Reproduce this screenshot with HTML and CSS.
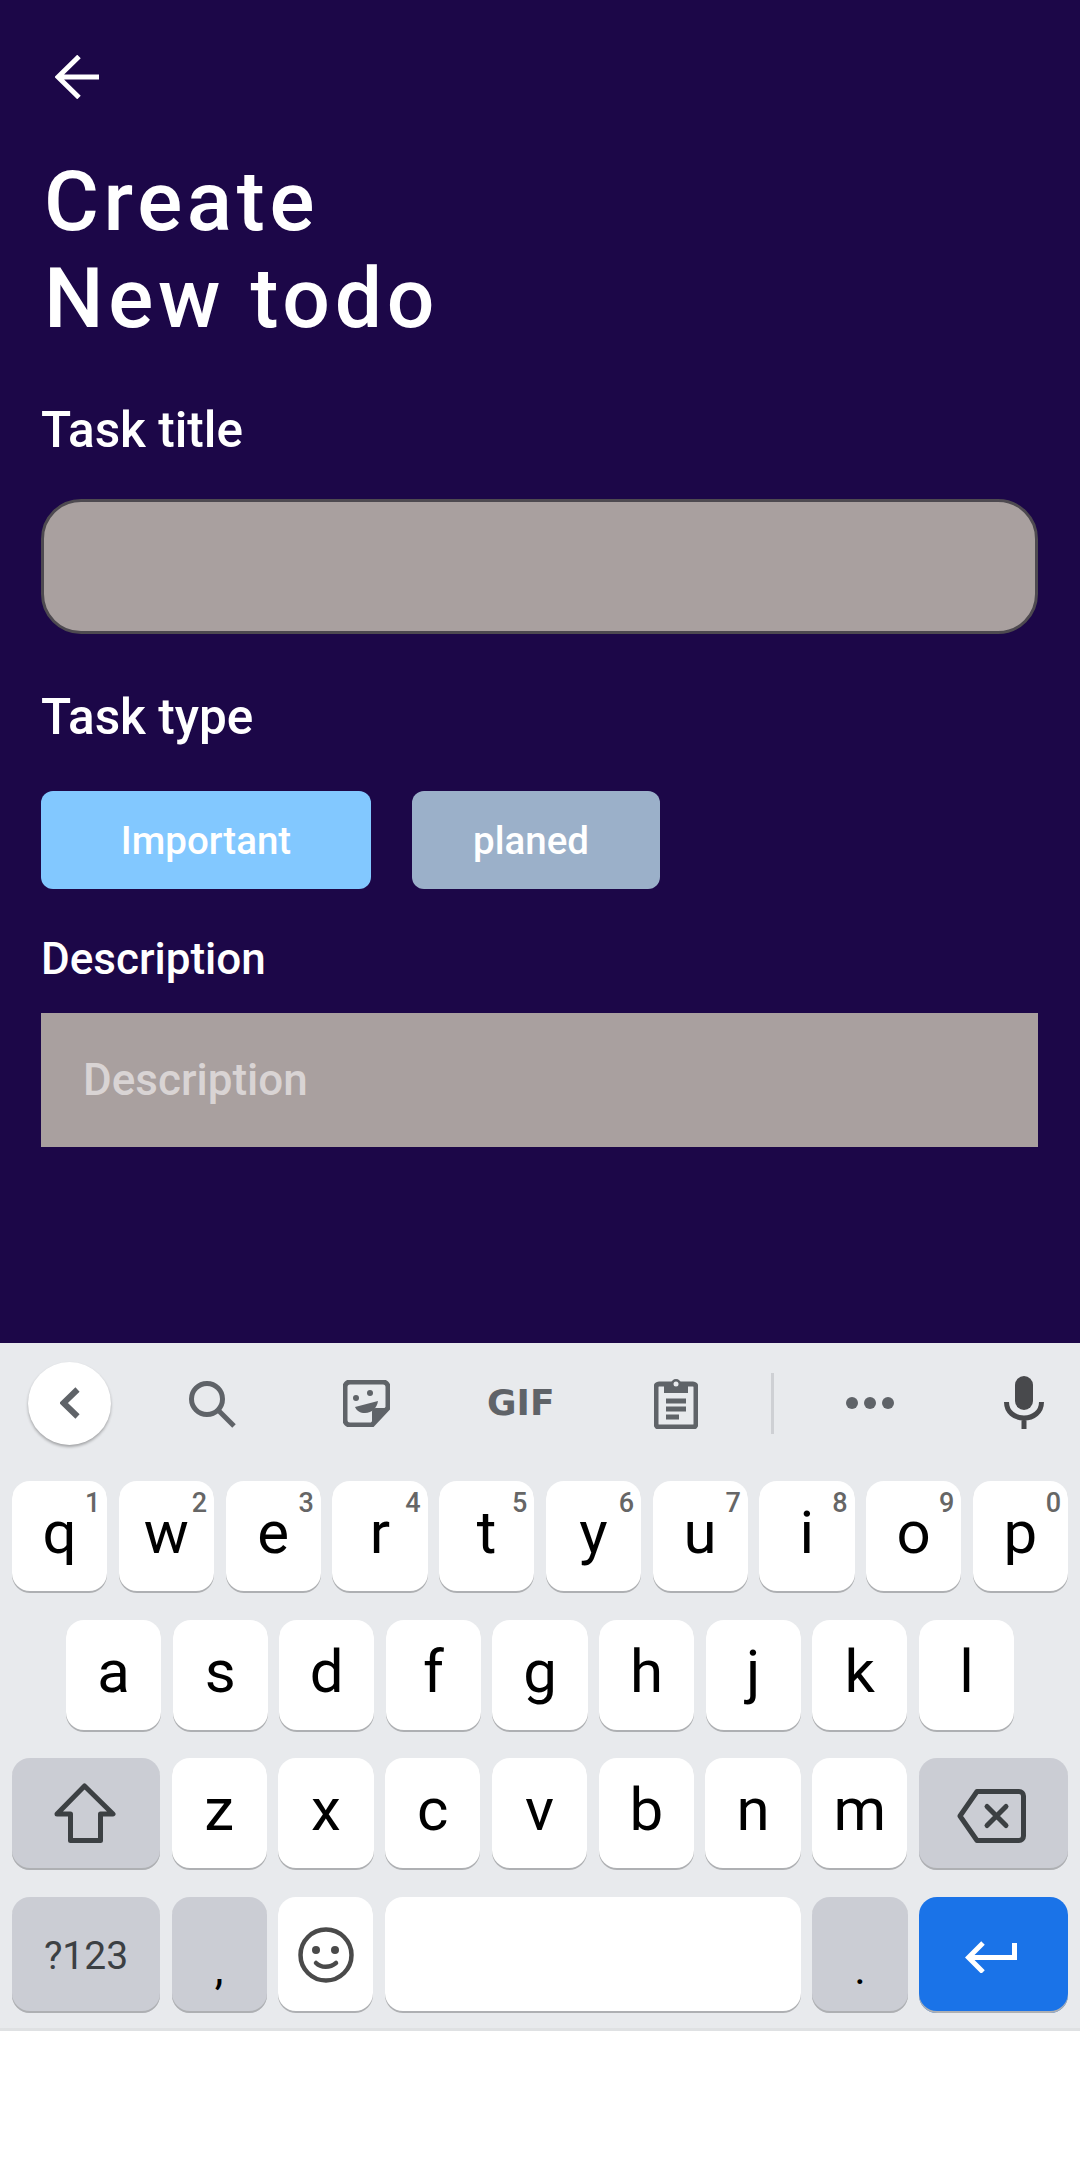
FILE: index.html
```html
<!DOCTYPE html>
<html lang="en">

<head>
    <meta charset="UTF-8">
    <meta name="viewport" content="width=device-width, initial-scale=1.0">
    <title>Create New todo</title>
    <link rel="stylesheet" href="styles.css">
</head>

<body>

    <div class="screen">
        <svg class="back-arrow" viewBox="0 0 44 44">
            <path d="M44 22H3M24 1.5L3 22l21 20.5" />
        </svg>

        <h1 class="page-title">Create<br>New todo</h1>

        <form class="todo-form">
            <label class="field-label" for="taskTitle">Task title</label>
            <input class="title-input" type="text" id="taskTitle">

            <label class="field-label type-label">Task type</label>
            <div class="type-buttons">
                <button class="type-btn type-important" type="button">Important</button>
                <button class="type-btn type-planed" type="button">planed</button>
            </div>

            <label class="field-label desc-label" for="taskDesc">Description</label>
            <input class="desc-input" type="text" id="taskDesc" placeholder="Description">
        </form>
    </div>

    <div class="keyboard">
        <div class="kb-toolbar">
            <div class="tool-back">
                <svg width="20" height="32" viewBox="0 0 20 32">
                    <path class="ic-stroke chevron" d="M17.5 2.5L3.5 16l14 13.5" />
                </svg>
            </div>
            <svg class="tool-search" width="47" height="47" viewBox="0 0 47 47">
                <circle class="ic-stroke" cx="18" cy="18" r="15.5" />
                <path class="ic-stroke" d="M29 29l16 16" />
            </svg>
            <svg class="tool-sticker" width="47" height="47" viewBox="0 0 47 47">
                <path class="ic-stroke" d="M7 2h33a5 5 0 0 1 5 5v21L29 45H7a5 5 0 0 1-5-5V7a5 5 0 0 1 5-5z" />
                <path class="ic-fill" d="M45 28H33a4 4 0 0 0-4 4v13z" />
                <circle class="ic-fill" cx="13" cy="18" r="3" />
                <circle class="ic-fill" cx="27" cy="13" r="3" />
                <path class="ic-fill" d="M12 27l23-6c-1 7-6 12-13 12-5 0-8-2-10-6z" />
            </svg>
            <span class="tool-gif">GIF</span>
            <svg class="tool-clip" width="44" height="52" viewBox="0 0 44 52">
                <rect class="ic-stroke" x="2" y="7" width="40" height="43" rx="3" />
                <path class="ic-fill" d="M10 7h7a5 5 0 0 1 10 0h7v9H10z" />
                <circle cx="22" cy="7" r="2.5" fill="#e8eaed" />
                <path class="ic-stroke" d="M12 24h20M12 32h20M12 40h13" />
            </svg>
            <div class="tool-divider"></div>
            <div class="tool-dots"><i></i><i></i><i></i></div>
            <svg class="tool-mic" width="40" height="53" viewBox="0 0 40 53">
                <rect x="11" y="0" width="18" height="34" rx="9" fill="#48494c" />
                <path class="mic-arc" d="M2.5 26c0 10 8 16 17.500 16s17.500-6 17.500-16M20 42v11" />
            </svg>
        </div>

        <div class="kb-rows">
            <div class="kb-row">
                <div class="key">q<span class="hint">1</span></div>
                <div class="key">w<span class="hint">2</span></div>
                <div class="key">e<span class="hint">3</span></div>
                <div class="key">r<span class="hint">4</span></div>
                <div class="key">t<span class="hint">5</span></div>
                <div class="key">y<span class="hint">6</span></div>
                <div class="key">u<span class="hint">7</span></div>
                <div class="key">i<span class="hint">8</span></div>
                <div class="key">o<span class="hint">9</span></div>
                <div class="key">p<span class="hint">0</span></div>
            </div>
            <div class="kb-row row-home">
                <div class="key">a</div>
                <div class="key">s</div>
                <div class="key">d</div>
                <div class="key">f</div>
                <div class="key">g</div>
                <div class="key">h</div>
                <div class="key">j</div>
                <div class="key">k</div>
                <div class="key">l</div>
            </div>
            <div class="kb-row">
                <div class="key key-wide key-left key-alt key-shift">
                    <svg width="62" height="60" viewBox="0 0 62 60">
                        <path class="key-ic" d="M30.500 3L59 31H46.500V57.500H16.500V31H3z" />
                    </svg>
                </div>
                <div class="key">z</div>
                <div class="key">x</div>
                <div class="key">c</div>
                <div class="key">v</div>
                <div class="key">b</div>
                <div class="key">n</div>
                <div class="key">m</div>
                <div class="key key-wide key-alt key-del">
                    <svg width="69" height="54" viewBox="0 0 69 54">
                        <path class="key-ic" d="M20 2.500H62a4.500 4.500 0 0 1 4.500 4.500V47a4.500 4.500 0 0 1-4.500 4.500H20L3 27z" />
                        <path class="key-ic" d="M30 17.500l19 19M49 17.500l-19 19" />
                    </svg>
                </div>
            </div>
            <div class="kb-row row-bottom">
                <div class="key key-wide key-left key-alt key-sym">?123</div>
                <div class="key key-alt key-punct">,</div>
                <div class="key key-emoji">
                    <svg width="56" height="56" viewBox="0 0 56 56">
                        <circle class="emoji-ic" cx="28" cy="28" r="25.500" />
                        <circle cx="18" cy="23" r="4" fill="#4a4a4a" />
                        <circle cx="37" cy="23" r="4" fill="#4a4a4a" />
                        <path class="emoji-ic" d="M18 36c5 5 14 5 20 0" />
                    </svg>
                </div>
                <div class="key key-space"></div>
                <div class="key key-alt key-punct">.</div>
                <div class="key key-wide key-enter">
                    <svg width="52" height="32" viewBox="0 0 52 32">
                        <path class="enter-ic" d="M49.500 2V16.500H4M18 2L3.500 16.500 18 31" />
                    </svg>
                </div>
            </div>
        </div>
    </div>

</body>
</html>
```

FILE: styles.css
```css
body {
    font-family: Roboto, sans-serif;
    background-color: #fff;
    margin: 0;
    height: 2160px;
    overflow: hidden;
}

/* app part */
.screen {
    height: 1343px;
    box-sizing: border-box;
    background-color: #1c0748;
    padding-top: 55px;
    color: #fff;
}

.back-arrow {
    display: block;
    width: 44px;
    height: 44px;
    margin-left: 55px;
    fill: none;
    stroke: #fff;
    stroke-width: 5;
}

.page-title {
    margin: 54px 0 0 44px;
    font-size: 84px;
    line-height: 97px;
    font-weight: 500;
    letter-spacing: 4.7px;
}

.todo-form {
    display: flex;
    flex-direction: column;
    align-items: flex-start;
    padding: 0 42px 0 41px;
}

.field-label {
    display: block;
    margin-top: 55px;
    font-size: 49.5px;
    line-height: 56px;
    font-weight: 500;
}

.title-input,
.desc-input {
    width: 100%;
    height: 135px;
    box-sizing: border-box;
    background-color: #a9a09f;
    font-family: Roboto, sans-serif;
}

.title-input {
    margin-top: 41px;
    border: 3px solid #4e4a50;
    border-radius: 40px;
}

.type-buttons {
    display: flex;
    gap: 41px;
    margin-top: 46px;
}

.type-btn {
    height: 98px;
    border: none;
    border-radius: 12px;
    color: #fff;
    font-family: Roboto, sans-serif;
    font-size: 38.5px;
    font-weight: 500;
}

.type-important {
    width: 330px;
    background-color: #82c8ff;
}

.type-planed {
    width: 248px;
    background-color: #9bb0c9;
    padding-right: 16px;
}

.desc-label {
    margin-top: 44px;
    font-size: 44px;
    line-height: 52px;
}

.desc-input {
    margin-top: 28px;
    height: 134px;
    border: none;
    padding: 0 42px;
    font-size: 44px;
    font-weight: 500;
}

.desc-input::placeholder {
    color: #d9d4d4;
    opacity: 1;
}

/* keyboard */
.keyboard {
    height: 688px;
    box-sizing: border-box;
    background-color: #e8eaed;
    border-bottom: 3px solid #dfe1e3;
}

.kb-toolbar {
    display: flex;
    align-items: center;
    height: 138px;
    box-sizing: border-box;
    padding: 0 0 18px 28px;
}

.ic-stroke {
    fill: none;
    stroke: #5f6368;
    stroke-width: 5;
}

.ic-fill {
    fill: #5f6368;
}

.chevron {
    stroke-width: 6;
}

.tool-back {
    display: flex;
    align-items: center;
    justify-content: center;
    width: 83px;
    height: 83px;
    border-radius: 50%;
    background-color: #fff;
    box-shadow: 0 2px 3px rgba(0, 0, 0, 0.3);
    padding-left: 1px;
    box-sizing: border-box;
}

.tool-search {
    margin-left: 78px;
    margin-top: 3px;
}

.tool-sticker {
    margin-left: 107px;
}

.tool-gif {
    margin-left: 97px;
    width: 68px;
    font-family: "DejaVu Sans", sans-serif;
    font-size: 36px;
    line-height: 40px;
    font-weight: 700;
    color: #5f6368;
}

.tool-clip {
    margin-left: 99px;
}

.tool-divider {
    width: 3px;
    height: 61px;
    margin-left: 73px;
    background-color: #ced0d4;
}

.tool-dots {
    display: flex;
    gap: 6px;
    margin-left: 72px;
}

.tool-dots i {
    width: 12px;
    height: 12px;
    border-radius: 50%;
    background-color: #5f6368;
}

.tool-mic {
    margin-left: 110px;
    margin-top: -1px;
}

.mic-arc {
    fill: none;
    stroke: #48494c;
    stroke-width: 5;
}

.kb-rows {
    display: flex;
    flex-direction: column;
    gap: 26.5px;
    padding: 0 12px;
}

.kb-row {
    display: flex;
    gap: 11.5px;
    height: 112px;
}

.row-home {
    padding: 0 54px;
}

.row-bottom {
    height: 116px;
}

.key {
    position: relative;
    flex: 1 1 0;
    display: flex;
    align-items: center;
    justify-content: center;
    box-sizing: border-box;
    padding-bottom: 9px;
    background-color: #fff;
    border-radius: 18px;
    box-shadow: inset 0 -2px 0 #aeb0b3;
    color: #000;
    font-size: 60px;
}

.hint {
    position: absolute;
    top: 7px;
    right: 7px;
    font-size: 27px;
    line-height: 30px;
    font-weight: 500;
    color: #666;
}

.key-wide {
    flex: 0 0 149px;
    padding-bottom: 0;
}

.key-left {
    flex-basis: 148px;
}

.key-alt {
    background-color: #cbcdd4;
}

.key-shift {
    padding: 0 2px 2px 0;
}

.key-del {
    padding: 4px 4px 0 0;
}

.key-emoji {
    padding-bottom: 0;
}

.key-space {
    flex: 0 0 416px;
}

.key-sym {
    font-size: 39px;
    color: #3c4043;
    padding-top: 2px;
}

.key-punct {
    font-size: 44px;
    padding: 28px 0 0 0;
}

.key-enter {
    background-color: #1a73e8;
    padding: 4px 5px 0 0;
}

.key-ic {
    fill: none;
    stroke: #3c4043;
    stroke-width: 5;
    stroke-linejoin: round;
    stroke-linecap: round;
}

.emoji-ic {
    fill: none;
    stroke: #4a4a4a;
    stroke-width: 4.5;
    stroke-linecap: round;
}

.enter-ic {
    fill: none;
    stroke: #fff;
    stroke-width: 5;
}
```
